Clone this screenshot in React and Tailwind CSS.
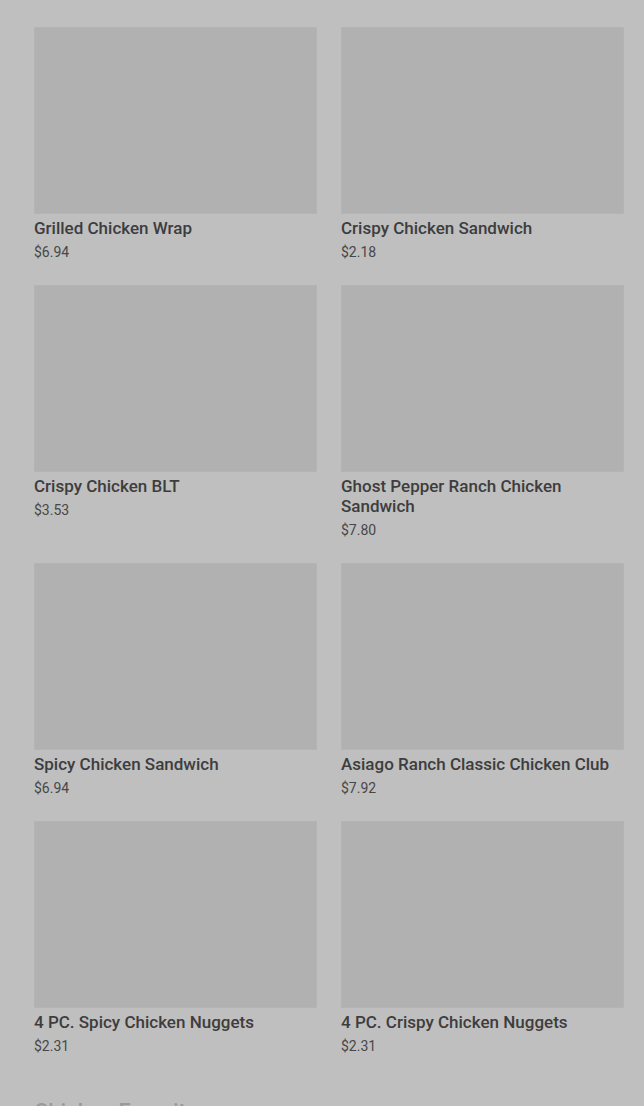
const items = [
  { name: 'Grilled Chicken Wrap', price: '$6.94' },
  { name: 'Crispy Chicken Sandwich', price: '$2.18' },
  { name: 'Crispy Chicken BLT', price: '$3.53' },
  { name: 'Ghost Pepper Ranch Chicken Sandwich', price: '$7.80' },
  { name: 'Spicy Chicken Sandwich', price: '$6.94' },
  { name: 'Asiago Ranch Classic Chicken Club', price: '$7.92' },
  { name: '4 PC. Spicy Chicken Nuggets', price: '$2.31' },
  { name: '4 PC. Crispy Chicken Nuggets', price: '$2.31' },
];

const Card = ({ item }) => (
  <div className="flex flex-col">
    <div className="h-[187px] w-full bg-[#b1b1b1] border border-[#b4b4b4]" />
    <p className="mt-[4px] text-[17px] leading-5 font-medium text-[#3d3d3d]">{item.name}</p>
    <p className="mt-[5px] text-[14px] leading-[18px] text-[#474747]">{item.price}</p>
  </div>
);

const App = () => {
  return (
    <div
      className="h-[1106px] overflow-hidden bg-[#bfbfbf] pt-[27px] pl-[34px] pr-[20px]"
      style={{ fontFamily: 'Roboto, "Noto Sans", sans-serif' }}
    >
      <div className="grid grid-cols-2 gap-x-6 gap-y-6">
        {items.map((item) => (
          <Card key={item.name} item={item} />
        ))}
      </div>
      <h2 className="mt-[43px] text-[22px] leading-7 font-medium text-[#9a9a9a]">
        Chicken Favorites
      </h2>
    </div>
  );
};

export default App;
